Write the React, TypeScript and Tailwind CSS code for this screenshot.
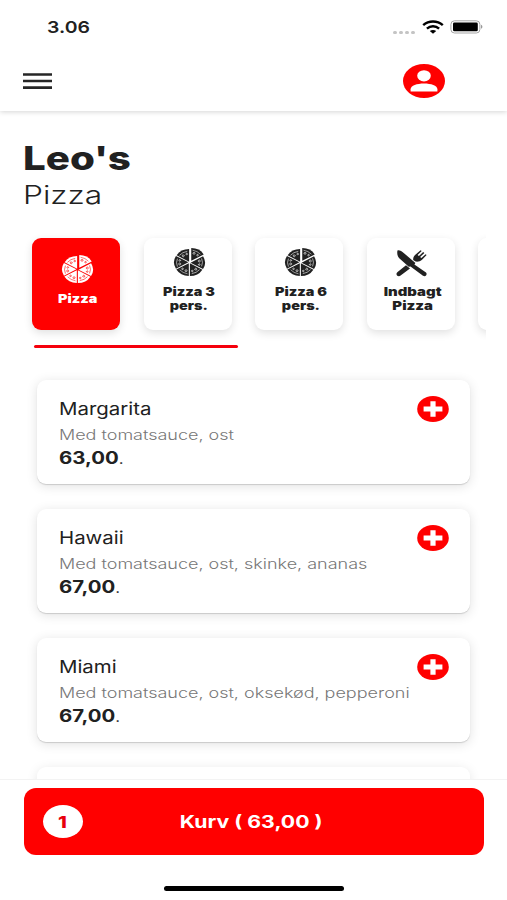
const categories = [
  { name: ["Pizza"], scale: "scale-x-[1.2]", icon: "pizza", active: true },
  { name: ["Pizza 3", "pers."], scale: "scale-x-[1.2]", icon: "pizza" },
  { name: ["Pizza 6", "pers."], scale: "scale-x-[1.2]", icon: "pizza" },
  { name: ["Indbagt", "Pizza"], scale: "scale-x-[1.24]", icon: "cutlery" },
  { name: [""], scale: "", icon: "" },
]

const items = [
  { name: "Margarita", desc: "Med tomatsauce, ost", price: "63,00" },
  { name: "Hawaii", desc: "Med tomatsauce, ost, skinke, ananas", price: "67,00" },
  { name: "Miami", desc: "Med tomatsauce, ost, oksekød, pepperoni", price: "67,00" },
]

const PizzaIcon = () => {
  // the upper right slice is pulled out a little
  const slices = [0, 60, 120, 180, 240, 300]
  return (
    <svg viewBox="-16 -16 32 32" preserveAspectRatio="none" className="w-[33px] h-[29px] ml-[3px]">
      {slices.map((a) => (
        <g key={a} transform={`rotate(${a}) translate(${a === 0 ? "1.4 -1.7" : "0.35 -0.6"})`}>
          <path d="M0 0V-14A14 14 0 0 1 12.1 -7Z" fill="currentColor" transform="translate(.3 -.2)" />
          <path d="M1.6 -11.8A12 12 0 0 1 9.2 -7.4" fill="none" stroke="var(--gap)" strokeWidth=".55" />
          <circle cx="3" cy="-8.4" r="1" fill="none" stroke="var(--gap)" strokeWidth=".65" />
          <circle cx="6.4" cy="-6.4" r=".8" fill="none" stroke="var(--gap)" strokeWidth=".65" />
        </g>
      ))}
    </svg>
  )
}

const CutleryIcon = () => (
  <svg viewBox="0 0 32 28" className="w-8 h-7 ml-[2px]" fill="currentColor">
    <path d="M1.5 1.5C3.4 .9 5.6 2.4 8 4.2L19.4 14L18.4 15.6L30 23.4C31.4 24.8 30.2 27.2 28.6 27.2C27.4 27.2 26.8 26.6 26 26L14.5 17.4L12.8 17.8L3.5 9.6C1.4 7.4 .8 4 1.5 1.5Z" />
    <path d="M10 16.2L14 19.6L4.6 26.6C3 27.7 .6 27 .5 25.2C.4 24.2 .9 23.6 1.6 23Z" />
    <path d="M17.2 10.9C17 8.5 18 6.6 20.2 4.9L24.6 1.2L25.7 2.1L21.6 6L22.9 7.1L27.1 3L28.4 4L24.1 8L25.4 9.1L29.6 5.2L30.6 6.1L26.3 10.5C24.3 12.4 21.8 13 19.6 12.6Z" />
  </svg>
)

const StatusBar = () => (
  <div className="h-[54px] flex items-start pt-[17px] pl-[47px]">
    <span className="text-[16.5px] leading-[21px] font-semibold origin-left scale-x-[1.18]">3.06</span>
    <div className="ml-auto mr-6 h-[21px] flex items-center">
      <div className="flex gap-[2px] pt-[9px] mr-[7px]">
        {[1, 2, 3, 4].map((n) => (
          <span key={n} className="w-1 h-[3px] rounded-full bg-[#c4c4c4]" />
        ))}
      </div>
      <svg viewBox="0 0 22 14" className="w-[22px] h-[14px] mr-[6px] -mt-px">
        <g fill="none" stroke="#000" strokeWidth="2.5">
          <path d="M1.2 5.1C6.8 .3 15.2 .3 20.8 5.1" />
          <path d="M4.9 8.6C8.4 5.6 13.6 5.6 17.1 8.6" />
        </g>
        <path d="M7.8 11C9.6 9.6 12.4 9.6 14.2 11L11 13.7Z" />
      </svg>
      <svg viewBox="0 0 33 14" className="w-[33px] h-[14px] -mt-px">
        <rect x=".9" y=".8" width="29" height="12.2" rx="3.6" fill="none" stroke="#a5a5a5" strokeWidth="1" />
        <rect x="3" y="2.5" width="24.8" height="8.8" rx="1.4" />
        <path d="M31 4.8C32.9 5.4 32.9 8.2 31 8.8Z" fill="#999" />
      </svg>
    </div>
  </div>
)

const App = () => {
  return (
    <div className="w-[507px] h-[900px] bg-white text-[#212121] font-['Inter',sans-serif] flex flex-col overflow-hidden">
      {/* HEADER */}
      <header className="h-[111px] shrink-0 shadow-[0_1px_5px_rgba(0,0,0,0.17)]">
        <StatusBar />
        <div className="h-[54px] flex items-center justify-between pl-[22.5px] pr-[62px]">
          <svg viewBox="0 0 29 17" className="w-[29px] h-[17px]" stroke="#262626" strokeWidth="2.6">
            <path d="M0 1.5H29M0 8H29M0 14.6H29" />
          </svg>
          <svg viewBox="0 0 42 34" className="w-[42px] h-[34px]">
            <ellipse cx="21" cy="17" rx="21" ry="17" fill="#f00" />
            <ellipse cx="21" cy="11.8" rx="6.8" ry="5.6" fill="#fff" />
            <path d="M7.6 27.4V25.2C7.6 21.6 14 19.5 21 19.5S34.4 21.6 34.4 25.2V27.4Z" fill="#fff" />
          </svg>
        </div>
      </header>
      {/* TITLE */}
      <div className="h-[115px] shrink-0 pl-[22.5px] pt-[26px] flex flex-col items-start">
        <h1 className="text-[33px] leading-[42px] font-extrabold origin-left scale-x-[1.22]">Leo's</h1>
        <h2 className="text-[25px] leading-[30px] mt-px font-light origin-left scale-x-[1.27]">Pizza</h2>
      </div>
      {/* CATEGORIES */}
      <div className="w-[463px] ml-[23px] h-[118px] shrink-0 overflow-hidden pl-[9px] pt-3">
        <div className="flex gap-[23.5px]">
          {categories.map((c, i) => (
            <div
              key={i}
              className={
                "w-[88px] h-[92px] shrink-0 rounded-[9px] flex flex-col items-center shadow-[0_3px_9px_rgba(0,0,0,0.12)] " +
                (c.active ? "bg-[#f00] text-white pt-[17px] [--gap:#f00]" : "bg-white pt-[10px] [--gap:#fff]")
              }
            >
              {c.icon === "pizza" && <PizzaIcon />}
              {c.icon === "cutlery" && <div className="pt-px"><CutleryIcon /></div>}
              <div className={"text-[12px] leading-[14px] font-black text-center whitespace-nowrap pt-[8px] pl-[3px] " + c.scale}>
                {c.name.map((line) => <div key={line}>{line}</div>)}
              </div>
            </div>
          ))}
        </div>
      </div>
      <div className="ml-[34px] mt-px w-[204px] h-[3px] shrink-0 rounded-full bg-[#f5000c]" />
      {/* MENU */}
      <main className="h-[431px] shrink-0 overflow-hidden pt-[32px] px-[37px] flex flex-col gap-[25px]">
        {items.map((item) => (
          <div key={item.name} className="h-[104px] shrink-0 rounded-[9px] bg-white pl-[22px] pr-[21px] pt-[18px] flex justify-between shadow-[0_1px_1px_rgba(0,0,0,0.15),0_2px_12px_rgba(0,0,0,0.12)]">
            <div className="flex flex-col items-start whitespace-nowrap">
              <span className="text-[17px] leading-[22px] origin-left scale-x-[1.2]">{item.name}</span>
              <span className="text-[14px] leading-[20px] mt-[5px] font-light text-[#777] origin-left scale-x-[1.285]">{item.desc}</span>
              <span className="text-[17px] leading-[24px] mt-px origin-left scale-x-[1.2]">
                <b>{item.price}</b>
                <span className="text-[14px]">.</span>
              </span>
            </div>
            <svg viewBox="0 0 32 26" className="w-8 h-[26px] -mt-[2px]">
              <ellipse cx="16" cy="13" rx="15.8" ry="13" fill="#f00" />
              <path d="M6.6 13H25.4M16 5.2V20.8" stroke="#fff" strokeWidth="5.2" />
            </svg>
          </div>
        ))}
        <div className="h-[104px] shrink-0 rounded-[9px] bg-white shadow-[0_2px_12px_rgba(0,0,0,0.1)]" />
      </main>
      {/* CART */}
      <footer className="h-[121px] shrink-0 border-t border-[#f3f3f3] bg-white px-6 pt-2">
        <button className="w-[460px] h-[67px] rounded-[12px] bg-[#f00] text-white flex items-center relative">
          <span className="absolute left-[19px] w-10 h-[33px] rounded-[50%] bg-white text-[#e8000c] flex items-center justify-center">
            <b className="text-[16px] font-extrabold pt-px pr-px scale-x-[1.25]">1</b>
          </span>
          <span className="w-full pr-[6px] pt-[2px] text-center">
            <span className="inline-block text-[17px] font-bold scale-x-[1.25]">Kurv ( 63,00 )</span>
          </span>
        </button>
        <div className="w-[180px] h-[5px] mx-auto mt-[31px] rounded-full bg-black" />
      </footer>
    </div>
  )
}
export default App
